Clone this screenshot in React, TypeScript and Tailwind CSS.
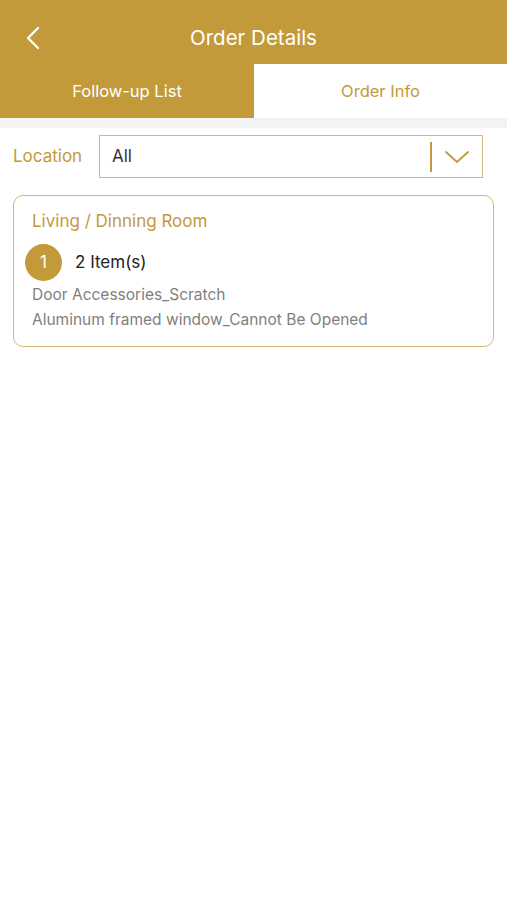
import React from "react";

export default function App() {
  const gold = "#c39a3a";
  return (
    <div className="w-[507px] h-[900px] bg-white flex flex-col" style={{ fontFamily: "Inter, 'Noto Sans', sans-serif" }}>
      <div className="h-[64px] bg-[#c39a3a] flex items-center relative pt-[12px]">
        <svg className="absolute left-[25px] top-[26px]" width="16" height="24" viewBox="0 0 16 24">
          <path d="M13 2 L3 12 L13 22" fill="none" stroke="#fff" strokeWidth="2.4" strokeLinecap="round" strokeLinejoin="round" />
        </svg>
        <div className="flex-1 text-center text-white text-[20.5px]">Order Details</div>
      </div>
      <div className="h-[54px] flex bg-[#c39a3a]">
        <div className="w-[254px] flex items-center justify-center text-white text-[16.5px]">Follow-up List</div>
        <div className="flex-1 bg-white flex items-center justify-center text-[#c39a3a] text-[16.5px]">Order Info</div>
      </div>
      <div className="h-[10px] bg-[#f3f3f3]" />
      <div className="flex items-center px-[13px] pt-[7px]">
        <div className="w-[86px] text-[17px] text-[#c39a3a]">Location</div>
        <div className="w-[384px] h-[43px] border border-[#d4b77a] flex items-center">
          <div className="flex-1 pl-[12px] text-[17px] text-[#333]">All</div>
          <div className="w-[2px] h-[30px] bg-[#c39a3a]" />
          <div className="w-[50px] flex items-center justify-center">
            <svg width="26" height="14" viewBox="0 0 26 14">
              <path d="M2 2 L13 12 L24 2" fill="none" stroke={gold} strokeWidth="1.8" strokeLinecap="round" strokeLinejoin="round" />
            </svg>
          </div>
        </div>
      </div>
      <div className="mx-[13px] mt-[17px] h-[152px] border border-[#d4b77a] rounded-[10px] flex flex-col">
        <div className="pl-[18px] pt-[13px] text-[17px] text-[#c39a3a] leading-[24px]">Living / Dinning Room</div>
        <div className="flex items-center pl-[11px] mt-[11px]">
          <div className="w-[37px] h-[37px] rounded-full bg-[#c39a3a] text-white text-[17px] flex items-center justify-center">1</div>
          <div className="ml-[13px] text-[17px] text-[#222]">2 Item(s)</div>
        </div>
        <div className="pl-[18px] mt-[1px] text-[15.5px] text-[#808080] leading-[25px]">Door Accessories_Scratch</div>
        <div className="pl-[18px] text-[15.5px] text-[#808080] leading-[25px]">Aluminum framed window_Cannot Be Opened</div>
      </div>
    </div>
  );
}
